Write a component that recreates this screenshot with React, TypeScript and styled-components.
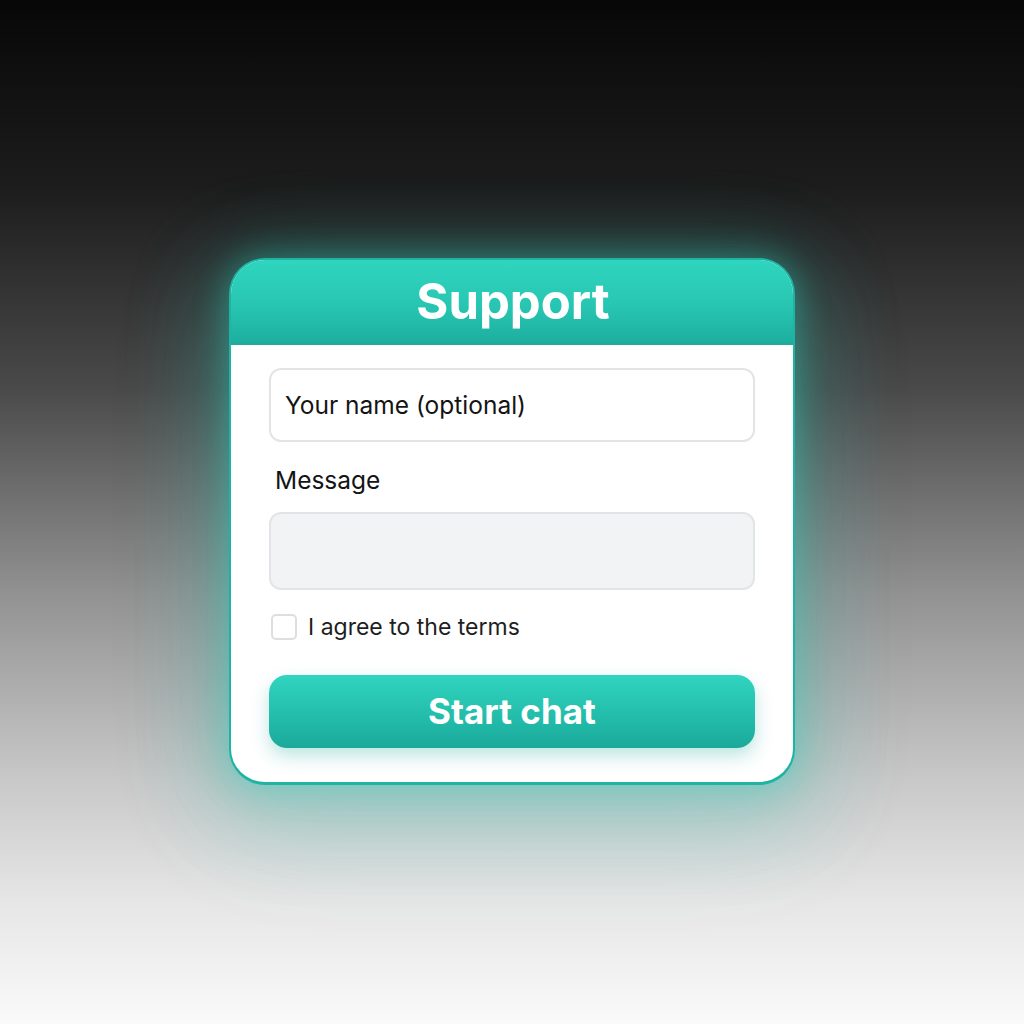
import React from "react";
import styled, { createGlobalStyle } from "styled-components";

const Global = createGlobalStyle`
  html, body { margin: 0; padding: 0; }
  body {
    font-family: Inter, "Noto Sans", "Liberation Sans", sans-serif;
    background: #000;
  }
  * { box-sizing: border-box; }
`;

const Page = styled.div`
  width: 1024px;
  height: 1024px;
  background: linear-gradient(180deg, #070707 0%, #1c1c1c 18%, #4a4a4a 38%, #929292 58%, #c8c8c8 76%, #e6e6e6 88%, #fafafa 100%);
  display: flex;
  justify-content: center;
  padding-top: 258px;
  overflow: hidden;
`;

const Card = styled.div`
  width: 566px;
  height: 527px;
  border: 2px solid #1fb3a3;
  border-bottom-width: 3px;
  border-radius: 36px;
  background: #ffffff;
  overflow: hidden;
  display: flex;
  flex-direction: column;
  box-shadow:
    0 0 30px 4px rgba(45, 212, 191, 0.35),
    0 16px 80px 22px rgba(40, 190, 172, 0.28),
    0 30px 120px 20px rgba(40, 180, 165, 0.08);
`;

const Header = styled.div`
  height: 85px;
  background: linear-gradient(180deg, #2fd5be 0%, #28c6b2 55%, #1dae9f 100%);
  display: flex;
  align-items: center;
  justify-content: center;
  border-bottom: 2px solid #22a99a;
`;

const Title = styled.h1`
  margin: 0;
  color: #ffffff;
  font-family: Inter, "Liberation Sans", sans-serif;
  font-weight: 700;
  font-size: 49px;
  padding-left: 2px;
`;

const Body = styled.div`
  padding: 23px 38px 0 38px;
  display: flex;
  flex-direction: column;
`;

const Field = styled.div<{ $filled?: boolean; $h: number }>`
  height: ${(p) => p.$h}px;
  border: 2px solid #e2e5e7;
  border-radius: 12px;
  background: ${(p) => (p.$filled ? "#f1f3f4" : "#ffffff")};
  display: flex;
  align-items: center;
  padding-left: 14px;
  font-size: 24.5px;
  color: #141414;
`;

const Label = styled.div`
  margin-top: 25px;
  margin-left: 6px;
  height: 26px;
  font-size: 24.5px;
  line-height: 26px;
  color: #141414;
`;

const Spacer = styled.div<{ $h: number }>`
  height: ${(p) => p.$h}px;
`;

const CheckRow = styled.label`
  display: flex;
  align-items: center;
  gap: 11px;
  margin-left: 2px;
  font-size: 23px;
  color: #1e1e1e;
  height: 26px;
`;

const Box = styled.span`
  width: 26px;
  height: 26px;
  border: 2px solid #dcdfe2;
  border-radius: 5px;
  background: #fff;
  display: inline-block;
  flex-shrink: 0;
`;

const Button = styled.button`
  height: 73px;
  border: none;
  border-radius: 18px;
  background: linear-gradient(180deg, #30d5bf 0%, #25c0ad 50%, #1aa99b 100%);
  color: #ffffff;
  font-family: Inter, "Liberation Sans", sans-serif;
  font-size: 35px;
  font-weight: 700;
  box-shadow: 0 8px 18px rgba(30, 170, 155, 0.3);
  cursor: pointer;
  padding-bottom: 2px;
`;

export default function App() {
  return (
    <>
      <Global />
      <Page>
        <Card>
          <Header>
            <Title>Support</Title>
          </Header>
          <Body>
            <Field $h={74}>Your name (optional)</Field>
            <Label>Message</Label>
            <Spacer $h={19} />
            <Field $h={78} $filled />
            <Spacer $h={24} />
            <CheckRow>
              <Box />
              I agree to the terms
            </CheckRow>
            <Spacer $h={35} />
            <Button>Start chat</Button>
          </Body>
        </Card>
      </Page>
    </>
  );
}
